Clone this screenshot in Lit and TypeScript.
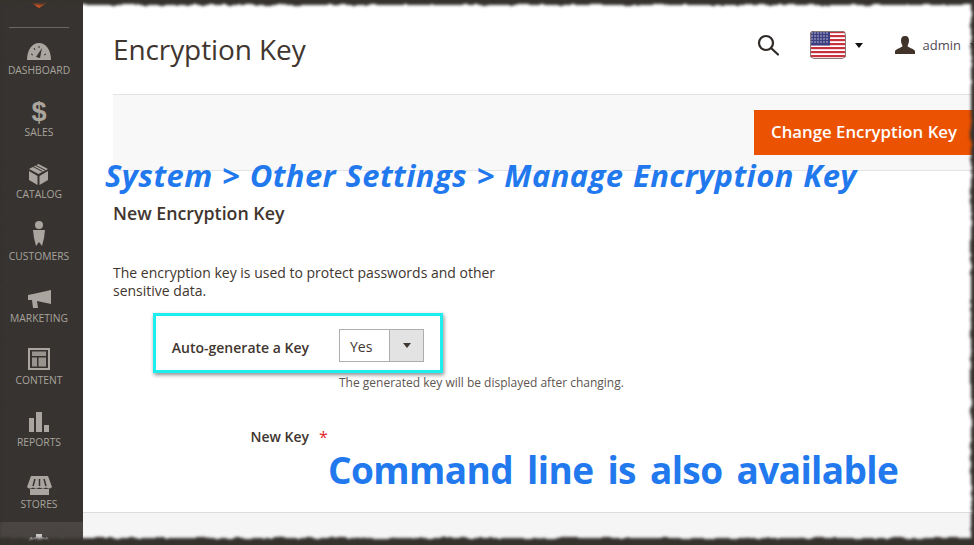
import { LitElement, html, css, svg } from "lit";
import { customElement } from "lit/decorators.js";

const navItems = [
  { label: "Dashboard", icon: svg`<path d="M3 22C3 12 8 5 15 5s12 7 12 17Z"/><path d="M12 19l6-9-2 10Z" fill="#373330"/><path d="M7 16l2 1M10 10l1 2M15 8v2M22 16l-2 1" stroke="#373330" stroke-width="1"/>` },
  { label: "Sales", icon: svg`<text x="15" y="21" text-anchor="middle" font-family="Liberation Sans" font-weight="700" font-size="27">$</text>` },
  { label: "Catalog", icon: svg`<path d="M14.5 2L24 7l-9.500 5L5 7Z"/><path d="M9 4.500l9.500 5M11.500 3.200l9.500 5" stroke="#373330" stroke-width="1"/><path d="M5 9l8.500 5v9L5 18ZM24 9l-8.500 5v9L24 18Z"/>` },
  { label: "Customers", icon: svg`<circle cx="15" cy="1" r="4"/><path d="M9 6h12l-1 8-2 8-3-4-3 4-2-8Z"/>` },
  { label: "Marketing", icon: svg`<path d="M4 9l5-1 18-4v14l-14-3 1 7H9l-1-8H4Z"/>` },
  { label: "Content", icon: svg`<path fill-rule="evenodd" d="M4 0h22v22H4ZM6 2v18h18V2Z"/><path opacity=".85" d="M8 3.500h14v4.500H8ZM8 9.500h5V18.500H8ZM14.500 9.500H22V18.500h-7.500Z"/>` },
  { label: "Reports", icon: svg`<path d="M5 8h5v14H5ZM12 2h6v20h-6ZM20 15h5v7h-5Z"/>` },
  { label: "Stores", icon: svg`<path d="M7 4h17l4 11c-2 2-4 2-6 .500-2 1.500-4 1.500-6.500 0-2.500 1.500-4.500 1.500-6.500 0C7 17 5 17 3 15Z"/><path d="M11 7l-2 7M15.500 7v7M20 7l2 7" stroke="#373330" stroke-width="1.500"/><path d="M6 17h19v6H6Z"/>` },
];

@customElement("app-root")
export class AppRoot extends LitElement {
  static styles = css`
    :host {
      display: block;
      width: 974px;
      height: 545px;
      position: relative;
      overflow: hidden;
      background: #fff;
      font-family: "Open Sans", sans-serif;
      color: #41362f;
    }
    .shell { display: flex; height: 100%; }
    .side {
      flex: 0 0 83px;
      background: #373330;
      box-sizing: border-box;
      padding-right: 5px;
      overflow: hidden;
    }
    .logo {
      height: 28px;
      margin: 0 9px;
      border-bottom: 1px solid #6b6661;
      box-sizing: border-box;
      display: flex;
      justify-content: center;
    }
    .nav { margin-top: -2px; }
    .item {
      height: 62px;
      padding-top: 12px;
      box-sizing: border-box;
      display: flex;
      flex-direction: column;
      align-items: center;
    }
    .item svg { display: block; width: 30px; height: 24px; overflow: visible; fill: #aaa59e; flex: none; }
    .label {
      font-size: 10.3px;
      line-height: 16px;
      text-transform: uppercase;
      color: #a8a39d;
      white-space: nowrap;
    }
    .active { background: #4a4542; margin-right: -5px; padding-right: 5px; }
    .active svg { fill: #c9c9c9; }
    .main { flex: 1; min-width: 0; display: flex; flex-direction: column; }
    .top {
      height: 94px;
      flex: none;
      box-sizing: border-box;
      margin-left: 30px;
      display: flex;
      align-items: flex-start;
    }
    h1 {
      margin: 30px 0 0;
      font-size: 28px;
      line-height: 38px;
      font-weight: 400;
      color: #41362f;
      flex: 1;
      letter-spacing: -0.1px;
    }
    .tools { display: flex; align-items: center; margin: 31px -4px 0 0; height: 28px; }
    .search { width: 22px; height: 22px; margin-right: 31px; }
    .flag { width: 36px; height: 28px; border-radius: 4px; display: block; overflow: hidden; }
    .caret { width: 0; height: 0; border: 4px solid transparent; border-top: 5px solid #111; border-bottom: 0; }
    .flag-caret { margin: 0 32px 0 9px; }
    .user { width: 20px; height: 18px; margin-right: 8px; }
    .admin { font-size: 13px; color: #514a55; margin-right: 9px; }
    .admin-caret { border-top-color: #555; }
    .bar {
      height: 77px;
      flex: none;
      margin-left: 30px;
      box-sizing: border-box;
      background: #f8f8f8;
      border-top: 1px solid #e3e3e3;
      border-bottom: 1px solid #e3e3e3;
      padding-top: 15px;
      display: flex;
      justify-content: flex-end;
    }
    .btn {
      width: 220px;
      height: 45px;
      box-sizing: border-box;
      background: #eb5202;
      color: #fff;
      font-size: 16.8px;
      font-weight: 600;
      line-height: 43px;
      padding-left: 17px;
      white-space: nowrap;
    }
    .content { flex: 1; padding: 31px 0 0 30px; min-height: 0; }
    h2 { margin: 0; font-size: 17.8px; line-height: 22px; font-weight: 600; color: #41362f; }
    .desc { margin: 40px 0 0; font-size: 14px; line-height: 18px; width: 400px; color: #41362f; }
    .field {
      display: grid;
      grid-template-columns: 196px 1fr;
      column-gap: 30px;
      align-items: center;
      position: relative;
    }
    .f1 { margin-top: 29px; }
    .f2 { margin-top: 31px; }
    .f-label { font-size: 14px; font-weight: 600; text-align: right; line-height: 20px; padding-top: 4px; color: #41362f; white-space: nowrap; }
    .select { display: flex; width: 85px; height: 33px; box-sizing: border-box; border: 1px solid #adadad; }
    .select-val { flex: 1; font-size: 14px; line-height: 33px; padding-left: 10px; }
    .select-arrow { width: 33px; background: #e3e3e3; border-left: 1px solid #adadad; display: flex; align-items: center; justify-content: center; }
    .select-arrow .caret { border-top-color: #41362f; }
    .note { grid-column: 2; font-size: 12px; line-height: 18px; margin-top: 12px; color: #5c5550; white-space: nowrap; }
    .star { grid-column: 2; color: #e22626; font-size: 16px; line-height: 20px; margin: 4px 0 0 -20px; }
    .hl {
      position: absolute;
      left: 40px;
      top: -16px;
      width: 290px;
      height: 60px;
      box-sizing: border-box;
      border: 3px solid #1ceeee;
      box-shadow: 1px 2px 4px rgba(0, 0, 0, 0.45);
      pointer-events: none;
    }
    .foot { height: 33px; flex: none; background: #f5f5f5; border-top: 1px solid #dcdcdc; box-sizing: border-box; }
    .note-a, .note-b {
      position: absolute;
      color: #2279ee;
      white-space: nowrap;
      font-family: "Open Sans", sans-serif;
      font-weight: 700;
    }
    .note-a { left: 105px; top: 153px; font-size: 31px; line-height: 44px; font-style: italic; letter-spacing: 0.4px; word-spacing: 1px; }
    .note-b { left: 328px; top: 445px; font-size: 37px; line-height: 50px; letter-spacing: -0.6px; word-spacing: 5px; }
    .frame { position: absolute; inset: 0; width: 974px; height: 545px; pointer-events: none; }
  `;

  render() {
    return html`
      <div class="shell">
        <aside class="side">
          <div class="logo">
            <svg width="16" height="9" viewBox="0 0 16 9"><path d="M0 0h16v3l-8 5-8-5Z" fill="#e0591f"/></svg>
          </div>
          <nav class="nav">
            ${navItems.map(
              (n) => html`<div class="item"><svg viewBox="0 0 30 24">${n.icon}</svg><span class="label">${n.label}</span></div>`
            )}
            <div class="item active">
              <svg viewBox="0 0 30 24"><path d="M12 0h6v3l3 1 2-1 3 4-2 2v10H6V9L4 7l3-4 2 1 3-1Z"/></svg>
            </div>
          </nav>
        </aside>
        <main class="main">
          <header class="top">
            <h1>Encryption Key</h1>
            <div class="tools">
              <svg class="search" viewBox="0 0 22 22" fill="none" stroke="#2f2a27" stroke-width="2.200">
                <circle cx="9" cy="9" r="7"/><path d="M14 14l7 6.500" stroke-linecap="round"/>
              </svg>
              <svg class="flag" viewBox="0 0 36 28">
                <rect width="36" height="28" fill="#fff"/>
                ${[2, 6, 10, 14, 18, 22, 26].map((y) => svg`<rect y="${y - 2}" width="36" height="2.200" fill="#c8313e"/>`)}
                <rect width="20" height="14.500" fill="#3d3f80"/>
                ${[2, 5, 8, 11].map((y) => [2, 5, 8, 11, 14, 17].map((x) => svg`<circle cx="${x}" cy="${y}" r=".7" fill="#dfe0ee"/>`))}
                <rect x=".5" y=".5" width="35" height="27" rx="3.500" fill="none" stroke="#8a7a78"/>
              </svg>
              <span class="caret flag-caret"></span>
              <svg class="user" viewBox="0 0 20 18" fill="#41322a">
                <path d="M10 0c3 0 4 2 4 4.500S13 8 12.500 10c0 1.500 6.500 2.500 7.500 5v3H0v-3c1-2.500 7.500-3.500 7.500-5C7 8 6 7 6 4.500S7 0 10 0Z"/>
              </svg>
              <span class="admin">admin</span>
              <span class="caret admin-caret"></span>
            </div>
          </header>
          <div class="bar"><div class="btn">Change Encryption Key</div></div>
          <section class="content">
            <h2>New Encryption Key</h2>
            <p class="desc">The encryption key is used to protect passwords and other sensitive data.</p>
            <div class="field f1">
              <span class="f-label">Auto-generate a Key</span>
              <div class="select">
                <span class="select-val">Yes</span>
                <span class="select-arrow"><span class="caret"></span></span>
              </div>
              <span class="note">The generated key will be displayed after changing.</span>
              <div class="hl"></div>
            </div>
            <div class="field f2">
              <span class="f-label">New Key</span>
              <span class="star">*</span>
            </div>
          </section>
          <footer class="foot"></footer>
        </main>
      </div>
      <div class="note-a">System &gt; Other Settings &gt; Manage Encryption Key</div>
      <div class="note-b">Command line is also available</div>
      <svg class="frame" viewBox="0 0 974 545">
        <defs>
          <filter id="rough" x="-5%" y="-5%" width="110%" height="110%">
            <feTurbulence type="fractalNoise" baseFrequency="0.12" numOctaves="2" seed="4"/>
            <feDisplacementMap in="SourceGraphic" scale="4" xChannelSelector="R" yChannelSelector="G"/>
            <feGaussianBlur stdDeviation="1.600"/>
          </filter>
        </defs>
        <path d="M-10-10H980V555H-10Z M0 5V538H971V5Z" fill="#35312e" fill-rule="evenodd" filter="url(#rough)"/>
      </svg>
    `;
  }
}
